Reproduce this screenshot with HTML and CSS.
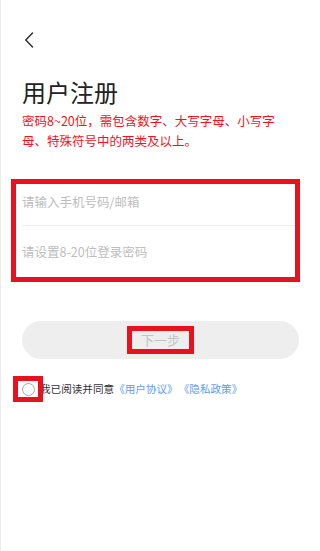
FILE: index.html
```html
<!DOCTYPE html>
<html lang="zh-CN">
<head>
<meta charset="utf-8">
<title>用户注册</title>
<link rel="stylesheet" href="styles.css">
</head>
<body>
<div class="page">
  <div class="topbar">
    <svg class="back" width="10" height="16" viewBox="0 0 10 16"><path d="M8.5 1 L1.8 8 L8.5 15" fill="none" stroke="#333" stroke-width="1.5" stroke-linecap="round" stroke-linejoin="round"/></svg>
  </div>
  <h1 class="title">用户注册</h1>
  <p class="desc">密码8~20位，需包含数字、大写字母、小写字母、特殊符号中的两类及以上。</p>
  <div class="form">
    <div class="row row-first"><span class="ph">请输入手机号码/邮箱</span></div>
    <div class="divider"></div>
    <div class="row row-second"><span class="ph">请设置8-20位登录密码</span></div>
  </div>
  <div class="btn"><span class="btn-text">下一步</span></div>
  <div class="agree">
    <span class="check"><span class="circle"></span></span>
    <span class="agree-text">我已阅读并同意</span>
    <span class="link">《用户协议》</span>
    <span class="link">《隐私政策》</span>
  </div>
</div>
</body>
</html>
```
FILE: styles.css
```css
html, body {
  margin: 0;
  padding: 0;
  background: #fff;
}
body {
  font-family: "Noto Sans CJK SC", "Noto Sans", sans-serif;
  color: #222;
  width: 320px;
  height: 551px;
  box-sizing: border-box;
  border-left: 1px solid #ececec;
}
.page {
  display: flex;
  flex-direction: column;
}
.topbar {
  padding: 32px 0 0 22px;
  height: 16px;
}
.back {
  display: block;
  margin-left: 1px;
}
.title {
  margin: 28px 0 0 21px;
  font-size: 24px;
  line-height: 32px;
  font-weight: 400;
  color: #222;
}
.desc {
  margin: 3px 0 0 21px;
  width: 258px;
  font-size: 12.5px;
  line-height: 20px;
  color: #f7101a;
}
.form {
  margin: 33px 0 0 15px;
  width: 279px;
  outline: 5px solid #e8121e;
  background: #fff;
}
.row {
  padding-left: 6px;
  font-size: 12.5px;
  color: #bdbdbd;
}
.row-first {
  height: 41px;
  line-height: 36px;
}
.row-second {
  height: 51px;
  line-height: 51px;
}
.divider {
  margin-left: 6px;
  height: 1px;
  background: #eeeeee;
}
.btn {
  margin: 44px 0 0 21px;
  width: 277px;
  height: 38px;
  border-radius: 19px;
  background: #eeeeee;
  display: flex;
  align-items: center;
  justify-content: center;
}
.btn-text {
  outline: 5px solid #e8121e;
  padding: 0 9px;
  height: 18px;
  line-height: 18px;
  font-size: 13px;
  color: #c4c4c4;
}
.agree {
  margin: 22px 0 0 17px;
  display: flex;
  align-items: center;
  height: 16px;
  font-size: 10.6px;
  line-height: 16px;
}
.check {
  width: 20px;
  height: 16px;
  outline: 5px solid #e8121e;
  display: flex;
  align-items: center;
  justify-content: center;
  position: relative;
  z-index: 1;
  background: #fff;
}
.circle {
  width: 11px;
  height: 11px;
  border: 1px solid #a8a8a8;
  border-radius: 50%;
}
.agree-text {
  margin-left: 2px;
  color: #333;
}
.link {
  color: #5d9df2;
}
.link + .link {
  margin-left: 1px;
}
```
